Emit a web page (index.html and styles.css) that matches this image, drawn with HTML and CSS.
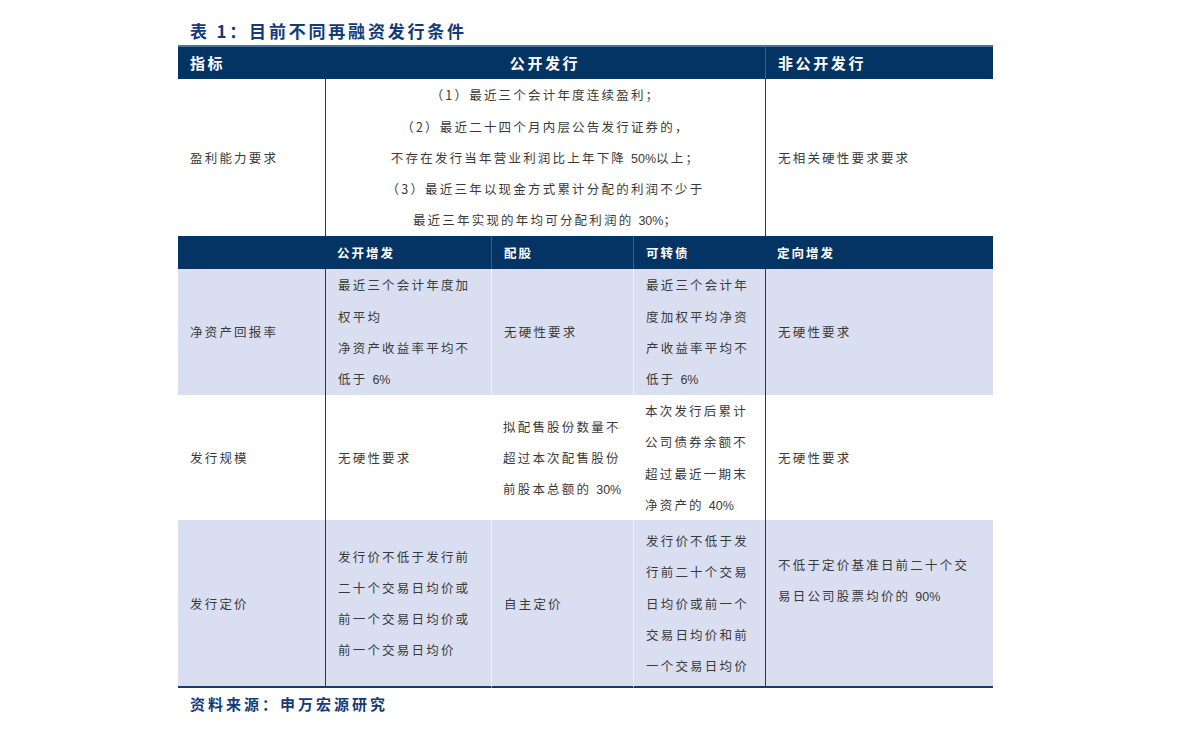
FILE: index.html
```html
<!DOCTYPE html>
<html lang="zh-CN">
<head>
<meta charset="utf-8">
<title>表1：目前不同再融资发行条件</title>
<link rel="stylesheet" href="styles.css">
</head>
<body>
<div class="page">
  <h1 class="title">表 1：目前不同再融资发行条件</h1>
  <table class="grid">
    <colgroup>
      <col class="c1"><col class="c2"><col class="c3"><col class="c4"><col class="c5">
    </colgroup>
    <thead>
      <tr class="head">
        <th class="h-left">指标</th>
        <th colspan="3" class="h-center">公开发行</th>
        <th class="h-left sep-dark">非公开发行</th>
      </tr>
    </thead>
    <tbody>
      <tr class="r1">
        <td>盈利能力要求</td>
        <td colspan="3" class="center sep-dark">（1）最近三个会计年度连续盈利；<br>（2）最近二十四个月内层公告发行证券的，<br>不存在发行当年营业利润比上年下降 <span class="num">50%</span>以上；<br>（3）最近三年以现金方式累计分配的利润不少于<br>最近三年实现的年均可分配利润的 <span class="num">30%</span>；</td>
        <td class="sep-dark">无相关硬性要求要求</td>
      </tr>
      <tr class="sub">
        <td></td>
        <td>公开增发</td>
        <td class="sep-sub">配股</td>
        <td class="sep-sub">可转债</td>
        <td>定向增发</td>
      </tr>
      <tr class="r2 light">
        <td>净资产回报率</td>
        <td class="sep-dark">最近三个会计年度加<br>权平均<br>净资产收益率平均不<br>低于 <span class="num">6%</span></td>
        <td class="sep-light">无硬性要求</td>
        <td class="sep-light">最近三个会计年<br>度加权平均净资<br>产收益率平均不<br>低于 <span class="num">6%</span></td>
        <td class="sep-dark">无硬性要求</td>
      </tr>
      <tr class="r3">
        <td>发行规模</td>
        <td class="sep-dark">无硬性要求</td>
        <td>拟配售股份数量不<br>超过本次配售股份<br>前股本总额的 <span class="num">30%</span></td>
        <td>本次发行后累计<br>公司债券余额不<br>超过最近一期末<br>净资产的 <span class="num">40%</span></td>
        <td class="sep-dark">无硬性要求</td>
      </tr>
      <tr class="r4 light last">
        <td>发行定价</td>
        <td class="sep-dark">发行价不低于发行前<br>二十个交易日均价或<br>前一个交易日均价或<br>前一个交易日均价</td>
        <td class="sep-light">自主定价</td>
        <td class="sep-light">发行价不低于发<br>行前二十个交易<br>日均价或前一个<br>交易日均价和前<br>一个交易日均价</td>
        <td class="sep-dark top">不低于定价基准日前二十个交<br>易日公司股票均价的 <span class="num">90%</span></td>
      </tr>
    </tbody>
  </table>
  <p class="source">资料来源：申万宏源研究</p>
</div>
</body>
</html>
```
FILE: styles.css
```css
* { box-sizing: border-box; }

html, body {
  margin: 0;
  padding: 0;
  background: #ffffff;
}

body {
  font-family: "Noto Sans CJK SC", "Noto Sans", sans-serif;
  color: #3a3a3a;
}

.page {
  width: 815px;
  margin-left: 178px;
  padding-top: 20px;
}

.title {
  margin: 0 0 3px 0;
  padding-left: 12px;
  height: 22px;
  line-height: 22px;
  font-size: 17px;
  font-weight: 700;
  letter-spacing: 2.8px;
  color: #143a78;
}

.grid {
  width: 815px;
  table-layout: fixed;
  border-collapse: separate;
  border-spacing: 0;
}

.c1 { width: 147px; }
.c2 { width: 166px; }
.c3 { width: 142px; }
.c4 { width: 132px; }
.c5 { width: 228px; }

.grid th,
.grid td {
  padding: 0 12px;
  vertical-align: middle;
  text-align: left;
  font-size: 12.5px;
  line-height: 31.3px;
  letter-spacing: 2.2px;
  font-weight: 400;
  white-space: nowrap;
}

.num {
  letter-spacing: 0;
  font-family: "Liberation Sans", "Noto Sans", sans-serif;
  font-size: 12.5px;
  line-height: 0;
}

.head { height: 34px; }
.head th {
  background: #033463;
  color: #ffffff;
  font-size: 15px;
  font-weight: 700;
  letter-spacing: 2.6px;
  line-height: 20px;
  border-top: 2px solid #4f72a2;
}
.head .h-center { text-align: center; }

.r1 { height: 157px; }
.r2 { height: 126px; }
.r3 { height: 125px; }
.r4 { height: 168px; }

.sub { height: 33px; }
.sub td {
  background: #033463;
  color: #ffffff;
  font-weight: 700;
  font-size: 12.5px;
  letter-spacing: 2px;
  line-height: 20px;
}

.light td { background: #d9dff1; }

.grid td.center { text-align: center; }

.sep-dark { border-left: 1px solid #163b72; }
.sep-light { border-left: 1px solid #eef1f9; }
.sep-sub { border-left: 1px solid #3c5f8f; }

.head .sep-dark { border-left: 1px solid #3c5f8f; }

.last td { border-bottom: 2px solid #163b72; }

.grid td.top {
  vertical-align: top;
  padding-top: 29px;
}

.source {
  margin: 4px 0 0 0;
  padding-left: 12px;
  height: 24px;
  line-height: 24px;
  font-size: 15px;
  font-weight: 700;
  letter-spacing: 3px;
  color: #143a78;
}
```
